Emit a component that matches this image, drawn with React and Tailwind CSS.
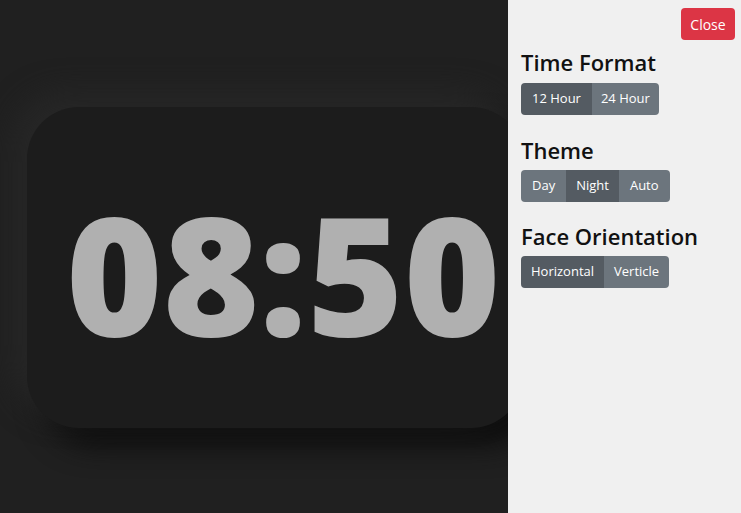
export default function App() {
  const btn = "h-[32px] text-[13px] text-white flex items-center";
  const on = "bg-[#545b62]";
  const off = "bg-[#6c757d]";
  const head = "text-[22px] font-semibold text-[#111] leading-none";
  return (
    <div className="w-[741px] h-[513px] flex bg-[#202020] overflow-hidden" style={{ fontFamily: '"Open Sans", sans-serif' }}>
      <div className="flex-1 relative overflow-hidden">
        <div className="mt-[107px] ml-[27px] w-[496px] h-[321px] rounded-[52px] bg-[#1c1c1c] shadow-[-14px_-14px_30px_#272727,16px_18px_28px_#0e0e0e] flex items-center pl-[39px] pt-[10px]">
          <div className="text-[165px] leading-none font-extrabold text-[#b0b0b0] tracking-normal">08:50</div>
        </div>
      </div>
      <div className="w-[233px] h-full bg-[#f0f0f0] pl-[13px] pr-[6px] pt-[8px] relative z-10">
        <div className="flex justify-end">
          <button className="h-[32px] w-[54px] rounded-[4px] bg-[#dc3545] text-white text-[14px]">Close</button>
        </div>
        <div className={`${head} mt-[11px]`}>Time Format</div>
        <div className="flex mt-[10px] rounded-[4px] overflow-hidden w-fit">
          <div className={`${btn} ${on} px-[11px]`}>12 Hour</div>
          <div className={`${btn} ${off} px-[9px]`}>24 Hour</div>
        </div>
        <div className={`${head} mt-[24px]`}>Theme</div>
        <div className="flex mt-[9px] rounded-[4px] overflow-hidden w-fit">
          <div className={`${btn} ${off} px-[11px]`}>Day</div>
          <div className={`${btn} ${on} px-[10px]`}>Night</div>
          <div className={`${btn} ${off} px-[11px]`}>Auto</div>
        </div>
        <div className={`${head} mt-[23px]`}>Face Orientation</div>
        <div className="flex mt-[9px] rounded-[4px] overflow-hidden w-fit">
          <div className={`${btn} ${on} px-[10px]`}>Horizontal</div>
          <div className={`${btn} ${off} px-[10px]`}>Verticle</div>
        </div>
      </div>
    </div>
  );
}
